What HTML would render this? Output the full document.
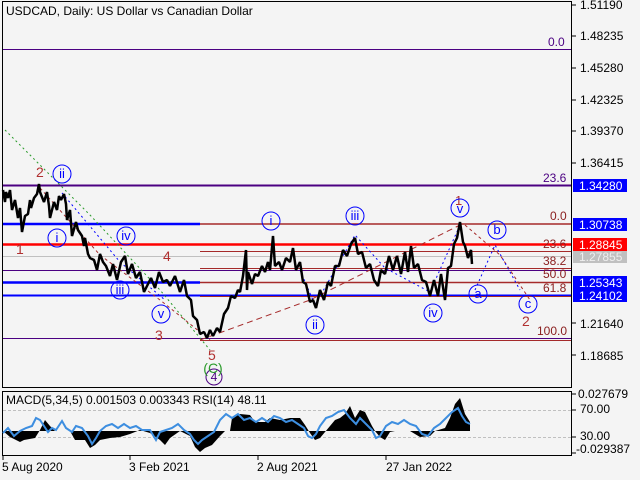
<!DOCTYPE html>
<html><head><meta charset="utf-8"><style>
html,body{margin:0;padding:0;background:#f4f4f4;}
svg{display:block;font-family:"Liberation Sans",sans-serif;}
</style></head><body>
<svg width="640" height="480" viewBox="0 0 640 480" xmlns="http://www.w3.org/2000/svg">
<rect width="640" height="480" fill="#f4f4f4"/>
<rect x="2.5" y="1.5" width="569" height="386" fill="none" stroke="#000"/>
<text x="6" y="15" font-size="12" fill="#000">USDCAD, Daily:  US Dollar vs Canadian Dollar</text>
<line x1="3" y1="49.5" x2="571" y2="49.5" stroke="#4b0082" stroke-width="1"/>
<line x1="3" y1="185.5" x2="571" y2="185.5" stroke="#4b0082" stroke-width="2"/>
<line x1="3" y1="224" x2="200" y2="224" stroke="#0000ff" stroke-width="2.5"/>
<line x1="200" y1="224" x2="571" y2="224" stroke="#a52a2a" stroke-width="1.5"/>
<line x1="3" y1="244.5" x2="571" y2="244.5" stroke="#ff0000" stroke-width="2.5"/>
<line x1="200" y1="251.5" x2="571" y2="251.5" stroke="#a52a2a" stroke-width="1"/>
<line x1="3" y1="256.5" x2="571" y2="256.5" stroke="#c0c0c0" stroke-width="1"/>
<line x1="200" y1="268.5" x2="571" y2="268.5" stroke="#a52a2a" stroke-width="1"/>
<line x1="3" y1="270.5" x2="571" y2="270.5" stroke="#4b0082" stroke-width="1"/>
<line x1="3" y1="282.5" x2="200" y2="282.5" stroke="#0000ff" stroke-width="2.5"/>
<line x1="200" y1="282.5" x2="571" y2="282.5" stroke="#a52a2a" stroke-width="1.5"/>
<line x1="3" y1="295.5" x2="571" y2="295.5" stroke="#0000ff" stroke-width="2"/>
<line x1="200" y1="296.5" x2="571" y2="296.5" stroke="#a52a2a" stroke-width="1"/>
<line x1="3" y1="338.5" x2="571" y2="338.5" stroke="#4b0082" stroke-width="1"/>
<line x1="200" y1="340.5" x2="571" y2="340.5" stroke="#a52a2a" stroke-width="1"/>
<g font-size="12" fill="#4b0082"><text x="548" y="46">0.0</text><text x="543" y="182">23.6</text></g>
<g font-size="12" fill="#8b2020"><text x="550" y="220">0.0</text><text x="543" y="248">23.6</text><text x="543" y="265">38.2</text><text x="543" y="278">50.0</text><text x="543" y="292">61.8</text><text x="537" y="335">100.0</text></g>
<polyline points="5,130 40,165 90,215 160,290 210,350" fill="none" stroke="#2a9a2a" stroke-dasharray="2,3"/>
<polyline points="40,188 100,255 160,300 210,340" fill="none" stroke="#a52a2a" stroke-dasharray="3,3"/>
<polyline points="62,193 120,262 165,300" fill="none" stroke="#0000ff" stroke-dasharray="2,3"/>
<polyline points="200,340 310,300 460,225" fill="none" stroke="#a52a2a" stroke-dasharray="6,4"/>
<polyline points="465,225 500,255 530,300" fill="none" stroke="#a52a2a" stroke-dasharray="3,3"/>
<polyline points="475,290 495,245 520,290" fill="none" stroke="#0000ff" stroke-dasharray="2,3"/>
<polyline points="300,270 315,305 355,235 385,268 430,292 460,225" fill="none" stroke="#0000ff" stroke-dasharray="2,3"/>
<polyline fill="none" stroke="#000" stroke-width="2.5" stroke-linejoin="bevel" points="3,190 5,202 6,192 8,198 10,190 12,210 15,200 18,218 20,208 22,232 25,216 28,214 30,200 31,208 34,198 37,194 39,184 40,192 44,202 47,192 49,206 50,218 54,202 57,210 59,196 61,200 64,194 66,204 67,220 70,210 72,236 76,222 78,230 82,236 84,246 85,238 88,254 90,258 94,260 97,270 100,254 103,262 106,266 110,276 113,264 117,280 121,262 125,256 128,274 132,264 136,278 140,272 144,292 147,286 151,278 155,288 159,272 163,282 167,280 170,286 175,276 180,292 184,280 187,296 191,300 193,316 197,320 200,334 204,332 207,338 210,330 213,336 217,328 220,332 224,314 228,308 231,296 235,298 238,290 240,292 243,276 246,250 247,290 248,272 252,284 255,274 258,276 262,266 265,272 268,262 270,270 273,236 275,266 279,262 282,270 286,258 290,262 293,248 296,270 300,262 303,282 306,284 310,302 313,300 316,308 320,290 324,300 328,282 331,286 335,266 339,266 343,250 347,256 351,244 355,238 358,254 362,252 366,268 370,264 374,280 378,286 381,270 385,274 389,256 393,270 397,256 401,274 405,252 408,272 411,246 414,268 418,264 422,280 426,282 430,296 434,280 438,296 441,274 445,300 448,268 451,266 454,244 457,238 460,222 463,242 465,246 468,258 471,250 472,264"/>
<g font-size="14" fill="#b03030"><text x="36" y="177">2</text><text x="16" y="254">1</text><text x="163" y="261">4</text><text x="155" y="340">3</text><text x="208" y="360">5</text><text x="455" y="205" font-size="13">1</text><text x="522" y="326">2</text></g>
<g fill="none" stroke="#0000ff" stroke-width="1">
<circle cx="62" cy="174" r="9"/><circle cx="57" cy="238" r="9"/><circle cx="126" cy="236" r="9"/><circle cx="120" cy="290" r="9"/><circle cx="161" cy="314" r="9"/><circle cx="271" cy="221" r="9"/><circle cx="355" cy="216" r="9"/><circle cx="315" cy="325" r="9"/><circle cx="433" cy="313" r="9"/><circle cx="460" cy="208" r="9"/><circle cx="497" cy="230" r="9"/><circle cx="478" cy="294" r="9"/><circle cx="528" cy="304" r="9"/>
</g>
<circle cx="214" cy="377" r="8" fill="none" stroke="#4b0082"/>
<g font-size="13" fill="#0000ff" text-anchor="middle">
<text x="62" y="178">ii</text><text x="57" y="242">i</text><text x="126" y="240">iv</text><text x="120" y="294">iii</text><text x="161" y="318">v</text><text x="271" y="225">i</text><text x="355" y="220">iii</text><text x="315" y="329">ii</text><text x="433" y="317">iv</text><text x="460" y="213">v</text><text x="497" y="234">b</text><text x="478" y="298">a</text><text x="528" y="308">c</text>
</g>
<text x="214" y="381" font-size="12" fill="#4b0082" text-anchor="middle">4</text>
<text x="213" y="373" font-size="14" fill="#2a9a2a" text-anchor="middle">(C)</text>
<g font-size="12" fill="#000">
<text x="580" y="9">1.51190</text><text x="580" y="40">1.48235</text><text x="580" y="72">1.45280</text><text x="580" y="104">1.42325</text><text x="580" y="135">1.39370</text><text x="580" y="167">1.36415</text><text x="580" y="328">1.21640</text><text x="580" y="360">1.18685</text>
</g>
<g stroke="#000"><line x1="572" y1="5" x2="576" y2="5"/><line x1="572" y1="36" x2="576" y2="36"/><line x1="572" y1="68" x2="576" y2="68"/><line x1="572" y1="100" x2="576" y2="100"/><line x1="572" y1="131" x2="576" y2="131"/><line x1="572" y1="163" x2="576" y2="163"/><line x1="572" y1="323" x2="576" y2="323"/><line x1="572" y1="355" x2="576" y2="355"/></g>
<rect x="573" y="179" width="54" height="13" fill="#0000ff"/><text x="579" y="190" font-size="12" fill="#fff">1.34280</text>
<rect x="573" y="218" width="54" height="13" fill="#0000ff"/><text x="579" y="229" font-size="12" fill="#fff">1.30738</text>
<rect x="573" y="238" width="54" height="13" fill="#ff0000"/><text x="579" y="249" font-size="12" fill="#fff">1.28845</text>
<rect x="573" y="251" width="54" height="12" fill="#c0c0c0"/><text x="579" y="261" font-size="12" fill="#eee">1.27855</text>
<rect x="573" y="276" width="54" height="26" fill="#0000ff"/><text x="579" y="287" font-size="12" fill="#fff">1.25343</text><text x="579" y="300" font-size="12" fill="#fff">1.24102</text>
<rect x="2.5" y="391.5" width="569" height="64" fill="none" stroke="#000"/>
<line x1="3" y1="410.5" x2="571" y2="410.5" stroke="#c0c0c0" stroke-dasharray="3,2"/>
<line x1="3" y1="437.5" x2="571" y2="437.5" stroke="#c0c0c0" stroke-dasharray="3,2"/>
<polygon fill="#000" points="3,431 10,437 20,442 24,440 35,438 40,430 45,420 50,426 55,431 70,431 75,440 85,440 90,448 95,445 100,440 110,438 120,437 130,434 140,430 150,433 160,440 165,445 170,438 180,431 190,436 195,447 200,452 205,448 212,445 220,436 225,431 230,431 232,418 240,414 250,415 255,422 265,422 270,418 280,420 290,418 300,418 305,425 310,433 315,440 320,438 325,432 330,426 335,420 340,418 345,414 350,406 355,418 360,410 365,412 372,426 375,431 380,437 385,440 390,432 395,431 410,431 420,437 430,436 435,431 445,428 450,418 455,404 460,398 465,414 470,422 470,431 3,431"/>
<polyline fill="none" stroke="#3d8ee0" stroke-width="2" points="3,433 8,428 14,436 20,431 26,428 32,426 36,418 40,420 44,426 48,432 52,428 56,430 62,421 66,428 72,432 76,426 82,428 88,436 92,444 96,438 100,431 106,426 112,424 118,428 124,424 130,428 136,426 142,430 150,430 156,440 160,432 166,430 172,428 178,424 184,430 190,434 194,440 198,444 202,440 208,436 214,432 220,420 226,414 232,418 238,414 244,420 250,418 256,422 262,418 268,422 274,416 280,418 286,422 292,420 298,424 304,428 308,436 312,438 316,434 320,426 326,418 332,416 338,412 344,410 350,418 356,424 360,418 366,424 372,430 376,438 380,436 386,426 392,422 398,424 404,420 410,424 416,426 422,434 428,436 434,428 440,424 446,418 452,412 458,408 462,416 466,422 470,424"/>
<text x="6" y="404" font-size="12" fill="#000">MACD(5,34,5) 0.001503 0.003343 RSI(14) 48.11</text>
<g font-size="12" fill="#000"><text x="578" y="398">0.027679</text><text x="580" y="413">70.00</text><text x="580" y="440">30.00</text><text x="576" y="453">-0.029387</text></g>
<g stroke="#000"><line x1="572" y1="394" x2="576" y2="394"/><line x1="572" y1="410" x2="576" y2="410"/><line x1="572" y1="437" x2="576" y2="437"/><line x1="572" y1="453" x2="576" y2="453"/>
<line x1="3" y1="456" x2="3" y2="460"/><line x1="130" y1="456" x2="130" y2="460"/><line x1="258" y1="456" x2="258" y2="460"/><line x1="386" y1="456" x2="386" y2="460"/></g>
<g font-size="12" fill="#000"><text x="2" y="471">5 Aug 2020</text><text x="129" y="471">3 Feb 2021</text><text x="257" y="471">2 Aug 2021</text><text x="386" y="471">27 Jan 2022</text></g>
</svg>
</body></html>
